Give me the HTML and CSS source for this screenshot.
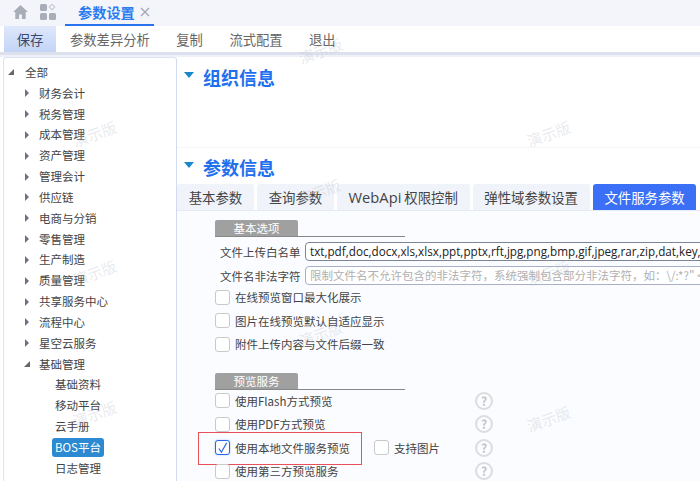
FILE: index.html
```
<!DOCTYPE html>
<html lang="zh-CN">
<head>
<meta charset="utf-8">
<title>参数设置</title>
<link rel="stylesheet" href="styles.css">
</head>
<body>
<div class="app">
  <header class="topbar">
    <svg class="home" viewBox="0 0 16 16" width="17" height="16"><path d="M8 1 .6 8h2.2v7h3.8v-4.6h2.800V15h3.800V8h2.200z" fill="#a9adb8"/></svg>
    <svg class="apps" viewBox="0 0 16 16" width="16" height="16"><rect x="0" y="0" width="7" height="7" rx="1.500" fill="#a9adb8"/><rect x="10" y="1" width="4" height="4" fill="none" stroke="#c3c6cf" transform="rotate(45 12 3)"/><rect x="0" y="9" width="7" height="7" rx="1.500" fill="#a9adb8"/><rect x="9" y="9" width="7" height="7" rx="1.500" fill="#a9adb8"/></svg>
    <div class="doc-tab"><span>参数设置</span><svg viewBox="0 0 10 10" width="10" height="10"><path d="M1 1l8 8M9 1l-8 8" stroke="#a3a8b4" stroke-width="1.400"/></svg></div>
  </header>
  <nav class="toolbar">
    <span class="tool active">保存</span><span class="tool">参数差异分析</span><span class="tool">复制</span><span class="tool">流式配置</span><span class="tool">退出</span>
  </nav>
  <div class="body">
    <aside class="tree">
      <div class="node l0"><i class="open"></i>全部</div>
      <div class="node l1"><i></i>财务会计</div>
      <div class="node l1"><i></i>税务管理</div>
      <div class="node l1"><i></i>成本管理</div>
      <div class="node l1"><i></i>资产管理</div>
      <div class="node l1"><i></i>管理会计</div>
      <div class="node l1"><i></i>供应链</div>
      <div class="node l1"><i></i>电商与分销</div>
      <div class="node l1"><i></i>零售管理</div>
      <div class="node l1"><i></i>生产制造</div>
      <div class="node l1"><i></i>质量管理</div>
      <div class="node l1"><i></i>共享服务中心</div>
      <div class="node l1"><i></i>流程中心</div>
      <div class="node l1"><i></i>星空云服务</div>
      <div class="node l1"><i class="open"></i>基础管理</div>
      <div class="node l2">基础资料</div>
      <div class="node l2">移动平台</div>
      <div class="node l2">云手册</div>
      <div class="node l2"><b class="selected">BOS平台</b></div>
      <div class="node l2">日志管理</div>
    </aside>
    <main class="main">
      <section class="org">
        <h2 class="sec-title"><i class="caret"></i>组织信息</h2>
      </section>
      <section class="params">
        <h2 class="sec-title"><i class="caret"></i>参数信息</h2>
        <div class="tabs">
          <span class="tab">基本参数</span><span class="tab">查询参数</span><span class="tab"><span class="lat">WebApi</span>&nbsp;权限控制</span><span class="tab">弹性域参数设置</span><span class="tab on">文件服务参数</span>
        </div>
        <div class="pane">
          <div class="legend"><span>基本选项</span></div>
          <div class="field"><label>文件上传白名单</label><div class="input">txt,pdf,doc,docx,xls,xlsx,ppt,pptx,rft,jpg,png,bmp,gif,jpeg,rar,zip,dat,key,</div></div>
          <div class="field"><label>文件名非法字符</label><div class="input ph">限制文件名不允许包含的非法字符，系统强制包含部分非法字符，如：\/:*?" &lt;</div></div>
          <div class="check first"><i class="box"></i>在线预览窗口最大化展示</div>
          <div class="check"><i class="box"></i>图片在线预览默认自适应显示</div>
          <div class="check"><i class="box"></i>附件上传内容与文件后缀一致</div>
          <div class="legend second"><span>预览服务</span></div>
          <div class="check svc"><div class="left"><i class="box"></i>使用Flash方式预览</div><i class="help">?</i></div>
          <div class="check svc"><div class="left"><i class="box"></i>使用PDF方式预览</div><i class="help">?</i></div>
          <div class="check svc marked"><div class="left"><i class="box on"><svg viewBox="0 0 14 14" width="14" height="14"><path d="M3 7.500 5.800 11.500 11.500 1.500" fill="none" stroke="#2468e8" stroke-width="1.200"/></svg></i>使用本地文件服务预览</div><div class="extra"><i class="box"></i>支持图片</div><i class="help">?</i></div>
          <div class="check svc"><div class="left"><i class="box"></i>使用第三方预览服务</div><i class="help">?</i></div>
        </div>
      </section>
    </main>
  </div>
  <div class="wm w1">演示版</div>
  <div class="wm w2">演示版</div>
  <div class="wm w3">演示版</div>
  <div class="wm w4">演示版</div>
  <div class="wm w5">演示版</div>
  <div class="wm w6">演示版</div>
  <div class="wm w7">演示版</div>
  <div class="wm w8">演示版</div>
  <div class="wm w9">演示版</div>
</div>
</body>
</html>
```
FILE: styles.css
```
* { box-sizing: border-box; }
html, body { margin: 0; padding: 0; }
body { width: 700px; height: 481px; overflow: hidden; background: #fff; font-family: "Noto Sans CJK SC", "Noto Sans", sans-serif; color: #444; }
.app { position: relative; width: 700px; height: 481px; overflow: hidden; display: flex; flex-direction: column; }

.topbar { height: 26px; flex: none; background: #f4f5fa; display: flex; align-items: center; padding-left: 12px; }
.home { margin-top: -2px; }
.apps { margin: -2px 0 0 11px; }
.doc-tab { margin-left: 9px; width: 89px; height: 26px; border-bottom: 2px solid #2b72ee; display: flex; align-items: center; padding-left: 13px; gap: 5px; color: #2b7cf0; font-size: 14.200px; font-weight: 700; }
.doc-tab span { line-height: 24px; }

.toolbar { height: 26px; flex: none; background: #fff; display: flex; align-items: stretch; padding-left: 4px; font-size: 13.300px; color: #666; }
.tool { display: flex; align-items: center; margin-right: 26.500px; }
.tool.active { width: 52px; margin-right: 14px; justify-content: center; color: #3a4a68; background: linear-gradient(#dfe8fb, #c3d4f6); }

.body { flex: 1; display: flex; min-height: 0; padding: 5px 0 0 3px; background: linear-gradient(#dde1ee 0, #dde1ee 3px, #eff1f9 3px, #eff1f9 5px, #fff 5px) top / 100% 6px no-repeat; }
.tree { width: 174px; flex: none; background: #fff; border: 1px solid #dfe3f1; border-right: 1.500px solid #d3d9ee; border-bottom: 0; border-radius: 3px 3px 0 0; padding-top: 4px; font-size: 11.500px; }
.node { height: 20.840px; line-height: 20.840px; display: flex; align-items: center; white-space: nowrap; color: #444; }
.node i { width: 0; height: 0; flex: none; border-style: solid; border-width: 4px 0 4px 4px; border-color: transparent transparent transparent #6c7280; }
.node i.open { width: 0; border-width: 0 0 6px 6px; border-color: transparent transparent #666 transparent; }
.l0 { padding-left: 4px; }
.l0 i { margin-right: 11px; }
.l1 { padding-left: 21px; }
.l1 i { margin-right: 10px; }
.l1 i.open { margin-left: -1px; margin-right: 9px; }
.l2 { padding-left: 51px; }
.selected { margin-left: -3px; padding: 0 3px; height: 19px; line-height: 19px; background: #2b8ad2; color: #fff; border-radius: 3px; font-weight: 400; }

.main { flex: 1; min-width: 0; background: #fff; padding-top: 7px; }
.org { height: 83px; }
.params { padding-top: 6px; border-top: 1px solid #f3f5fb; }
.sec-title { margin: 0; height: 26px; display: flex; align-items: center; padding-left: 7px; font-size: 18px; font-weight: 700; color: #1f6fee; line-height: 26px; }
.caret { width: 0; height: 0; margin-right: 9px; margin-top: -4px; border-style: solid; border-width: 6px 5px 0 5px; border-color: #1a86cc transparent transparent transparent; }
.tabs { display: flex; gap: 3px; height: 27px; border-bottom: 1px solid #e6eaf5; margin-top: 4px; white-space: nowrap; }
.tab { display: flex; align-items: center; height: 26px; padding: 0 11.700px; background: #f0f3f9; font-family: "Noto Sans CJK SC", sans-serif; font-size: 13.400px; color: #444; border-radius: 3px 3px 0 0; }
.tab .lat { font-family: "Open Sans", sans-serif; font-size: 14.700px; }
.tab.on { background: #3a6ff6; color: #fff; }
.pane { padding: 9px 0 0 38px; background: #fbfcff; height: 270px; font-size: 11.500px; }
.legend { width: 190px; height: 17px; border-bottom: 1px solid #888; }
.legend span { display: block; width: 83px; height: 16px; background: #a0a0a0; color: #fff; text-align: center; line-height: 17px; border-radius: 2px 2px 0 0; }
.legend.second { margin-top: 16.500px; margin-bottom: -1px; }
.field { display: flex; align-items: center; height: 19px; margin-top: 5px; white-space: nowrap; }
.field label { margin-left: 5px; width: 85px; flex: none; color: #444; }
.input { flex: 1; width: 420px; min-width: 420px; height: 19px; line-height: 17px; border: 1px solid #7d8598; border-radius: 4px; padding: 0 4px; color: #222; font-family: "Open Sans", "Noto Sans CJK SC", sans-serif; font-size: 11.700px; background: #fff; overflow: hidden; }
.input.ph { color: #b0b0b0; border-color: #a8b0c8; font-family: "Noto Sans CJK SC", sans-serif; font-size: 11.500px; }
.check { display: flex; align-items: center; height: 23.600px; white-space: nowrap; position: relative; }
.check.first { margin-top: 0.500px; }
.box { width: 15px; height: 15px; flex: none; border: 1px solid #c9c9c9; border-radius: 3px; background: #fff; margin-right: 5px; display: block; }
.box.on { border: 1.500px solid #2468e8; display: flex; align-items: center; justify-content: center; box-shadow: 0 0 2px #9fc0f5; }
.left { width: 159px; flex: none; display: flex; align-items: center; }
.extra { display: flex; align-items: center; width: 101px; flex: none; }
.help { width: 18px; height: 18px; flex: none; border: 2px solid #dcdcdc; border-radius: 50%; color: #c4c4c4; font-style: normal; font-weight: 700; font-size: 12px; line-height: 14px; text-align: center; }
.left + .help { margin-left: 101px; }
.marked::after { content: ""; position: absolute; left: -17px; top: -3.500px; width: 162px; height: 31px; border: 1.500px solid #e8505a; pointer-events: none; }

.wm { position: absolute; font-size: 15px; color: rgba(185,190,200,.32); transform: rotate(-20deg); white-space: nowrap; pointer-events: none; }
.w1 { left: 298px; top: 40px; }
.w2 { left: 72px; top: 123px; }
.w3 { left: 296px; top: 181px; }
.w4 { left: 526px; top: 123px; }
.w5 { left: 72px; top: 262px; }
.w6 { left: 526px; top: 262px; }
.w7 { left: 72px; top: 403px; }
.w8 { left: 298px; top: 323px; }
.w9 { left: 526px; top: 408px; }
```
